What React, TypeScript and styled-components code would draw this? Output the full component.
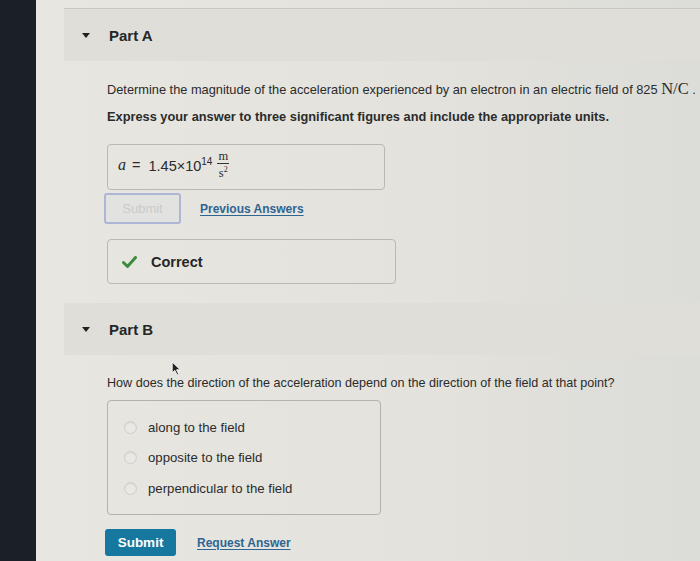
import React from 'react';
import styled, {createGlobalStyle} from 'styled-components';

const GlobalStyle = createGlobalStyle`
  html, body {
    margin: 0;
    padding: 0;
  }
  body {
    font-family: "Liberation Sans", Arial, sans-serif;
    color: #2b2b2b;
    background: #e4e3de;
  }
`;

const options = ['along to the field', 'opposite to the field', 'perpendicular to the field'];

const App = () => {
    return (
        <Page>
            <GlobalStyle/>
            <Sidebar/>
            <Main>
                <Section first>
                    <PartHeader>
                        <Caret/>
                        <PartTitle>Part A</PartTitle>
                    </PartHeader>
                    <PartBody>
                        <Prompt>
                            Determine the magnitude of the acceleration experienced by an electron in an electric field of 825{' '}
                            <Unit>N/C</Unit> .
                        </Prompt>
                        <Instruction>
                            Express your answer to three significant figures and include the appropriate units.
                        </Instruction>
                        <AnswerBox>
                            <MathVar>a</MathVar>
                            <Equals>=</Equals>
                            <span>1.45×10<Sup>14</Sup></span>
                            <Fraction>
                                <span className={'num'}>m</span>
                                <span className={'den'}>s<sup>2</sup></span>
                            </Fraction>
                        </AnswerBox>
                        <ActionRow>
                            <SubmitButton disabled>Submit</SubmitButton>
                            <TextLink href={'#'}>Previous Answers</TextLink>
                        </ActionRow>
                        <FeedbackBox>
                            <svg width="15" height="12" viewBox="0 0 15 12">
                                <path d="M1.5 6.5 L5.5 10.5 L13.5 1.5" fill="none" stroke="#3d8b3d" strokeWidth="3" strokeLinecap="round" strokeLinejoin="round"/>
                            </svg>
                            <span>Correct</span>
                        </FeedbackBox>
                    </PartBody>
                </Section>
                <Section>
                    <PartHeader>
                        <Caret/>
                        <PartTitle>Part B</PartTitle>
                    </PartHeader>
                    <PartBody>
                        <Question>
                            How does the direction of the acceleration depend on the direction of the field at that point?
                        </Question>
                        <OptionsBox>
                            {options.map((o) => (
                                <OptionRow key={o}>
                                    <Radio/>
                                    <span>{o}</span>
                                </OptionRow>
                            ))}
                        </OptionsBox>
                        <ActionRow bottom>
                            <SubmitButton>Submit</SubmitButton>
                            <TextLink href={'#'}>Request Answer</TextLink>
                        </ActionRow>
                    </PartBody>
                </Section>
            </Main>
            <Cursor width="11" height="15" viewBox="0 0 10 14">
                <path d="M1 1 L1 11 L3.5 8.8 L5.5 13 L7 12.3 L5 8.2 L8.5 8.2 Z" fill="#222" stroke="#fff" strokeWidth="0.8"/>
            </Cursor>
        </Page>
    );
}

export default App;

const Page = styled.div`
  position: relative;
  display: flex;
  width: 700px;
  height: 561px;
  overflow: hidden;
`;

const Sidebar = styled.div`
  width: 36px;
  flex-shrink: 0;
  background: #1b1f28;
`;

const Main = styled.div`
  flex: 1;
  padding: 8px 0 0 28px;
  background: linear-gradient(90deg, #e7e6e1 0%, #e3e2dd 60%, #dcdcd8 100%);
`;

const Section = styled.section<{first?: boolean}>`
  border-top: ${(p) => (p.first ? '1px solid #c8c7c2' : 'none')};
`;

const PartHeader = styled.div`
  display: flex;
  align-items: center;
  height: 52px;
  padding-left: 18px;
  background: #dfded9;
`;

const Caret = styled.span`
  width: 0;
  height: 0;
  border-left: 4.5px solid transparent;
  border-right: 4.5px solid transparent;
  border-top: 5px solid #222;
  margin-right: 19px;
`;

const PartTitle = styled.h2`
  margin: 0;
  font-size: 15px;
  font-weight: bold;
  color: #262626;
`;

const PartBody = styled.div`
  padding: 19px 0 19px 43px;
`;

const Prompt = styled.p`
  margin: 0;
  font-size: 12.8px;
  line-height: 18px;
  white-space: nowrap;
`;

const Unit = styled.span`
  font-family: "Liberation Serif", "Times New Roman", serif;
  font-size: 16.5px;
`;

const Instruction = styled.p`
  margin: 9px 0 0;
  font-size: 12.8px;
  font-weight: bold;
  line-height: 18px;
  white-space: nowrap;
`;

const AnswerBox = styled.div`
  display: flex;
  align-items: center;
  width: 278px;
  height: 46px;
  box-sizing: border-box;
  margin-top: 18px;
  padding: 0 10px 4px;
  border: 1px solid #b9b8b4;
  border-radius: 4px;
  font-size: 14.5px;
`;

const MathVar = styled.i`
  font-family: "Liberation Serif", "Times New Roman", serif;
  font-size: 16px;
`;

const Equals = styled.span`
  margin: 0 8px 0 6px;
`;

const Sup = styled.sup`
  font-size: 10px;
`;

const Fraction = styled.span`
  display: inline-flex;
  flex-direction: column;
  align-items: center;
  margin-left: 5px;
  font-family: "Liberation Serif", "Times New Roman", serif;
  font-size: 12.5px;
  line-height: 12px;
  .num {
    border-bottom: 1px solid #333;
    padding: 0 1px 1px;
  }
  .den sup {
    font-size: 8px;
  }
`;

const ActionRow = styled.div<{bottom?: boolean}>`
  display: flex;
  align-items: center;
  gap: ${(p) => (p.bottom ? '21px' : '19px')};
  margin: ${(p) => (p.bottom ? '14px 0 0 -2px' : '3px 0 0 -3px')};
`;

const SubmitButton = styled.button`
  font-family: "Liberation Sans", Arial, sans-serif;
  font-weight: bold;
  font-size: 13.5px;
  border-radius: 3px;
  cursor: pointer;
  width: 71px;
  height: 27px;
  color: #fff;
  background: #17789f;
  border: none;
  &:disabled {
    width: 77px;
    height: 31px;
    color: #cbcbcb;
    font-weight: normal;
    font-size: 13px;
    background: #e2e2e0;
    border: 2px solid #aeb6d6;
    cursor: default;
  }
`;

const TextLink = styled.a`
  font-size: 12px;
  font-weight: bold;
  color: #2f6592;
  text-decoration: underline;
  text-underline-offset: 2px;
`;

const FeedbackBox = styled.div`
  display: flex;
  align-items: center;
  gap: 14px;
  width: 289px;
  height: 45px;
  box-sizing: border-box;
  margin-top: 15px;
  padding-left: 14px;
  border: 1px solid #b9b8b4;
  border-radius: 4px;
  font-size: 14.5px;
  font-weight: bold;
  color: #262626;
`;

const Question = styled.p`
  margin: 0;
  font-size: 12.6px;
  line-height: 18px;
  white-space: nowrap;
`;

const OptionsBox = styled.div`
  display: flex;
  flex-direction: column;
  gap: 12.5px;
  width: 274px;
  height: 115px;
  box-sizing: border-box;
  margin-top: 8px;
  padding: 17px 0 0 16px;
  border: 1px solid #b3b2ae;
  border-radius: 4px;
`;

const OptionRow = styled.label`
  display: flex;
  align-items: center;
  gap: 11px;
  height: 18px;
  font-size: 13.2px;
`;

const Radio = styled.span`
  width: 11px;
  height: 11px;
  border-radius: 50%;
  border: 1px solid #cfcecb;
  background: #e9e8e4;
  box-shadow: inset 0 1px 1px rgba(0, 0, 0, 0.08);
`;

const Cursor = styled.svg`
  position: absolute;
  left: 171px;
  top: 361px;
`;
